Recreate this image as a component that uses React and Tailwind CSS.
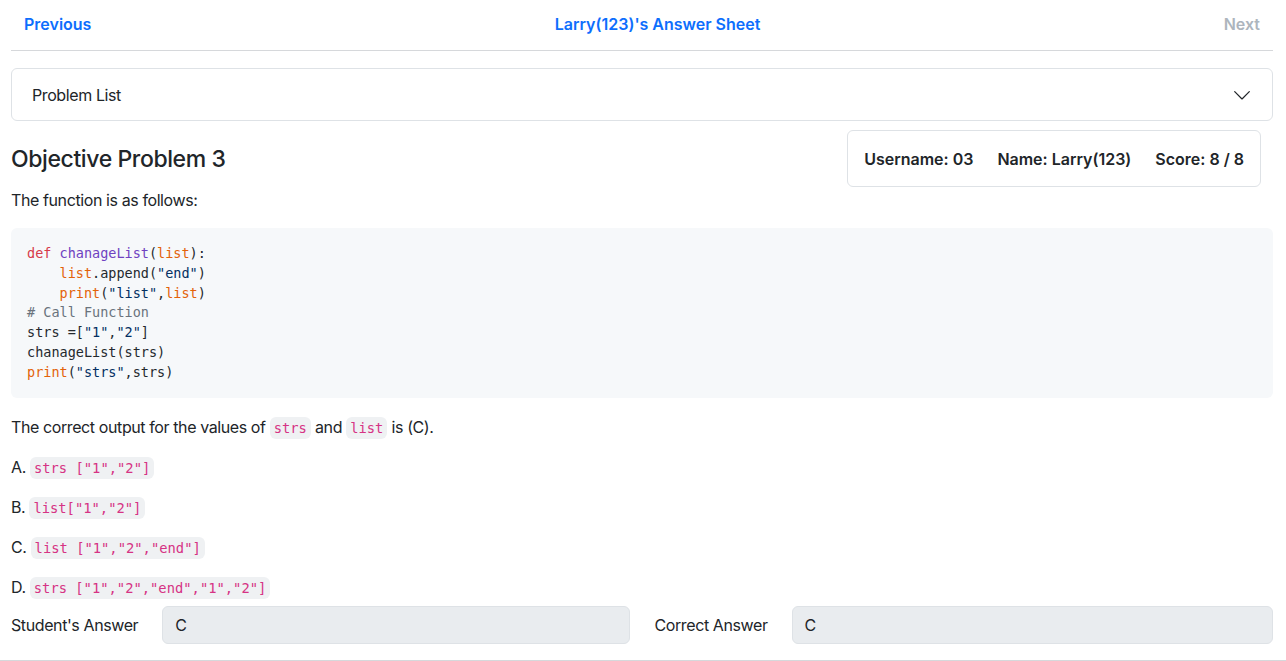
const sans = { fontFamily: 'Inter, "Noto Sans", sans-serif' };

function C({ children, className = '' }) {
  return <span className={className}>{children}</span>;
}

function Inline({ children }) {
  return (
    <code className="font-['DejaVu_Sans_Mono',monospace] text-[13.8px] leading-none tracking-normal text-[#d63384] bg-[#eff1f3] rounded-md px-[4px] py-[3px]">
      {children}
    </code>
  );
}

export default function App() {
  return (
    <div className="bg-white text-[#212529] min-h-screen" style={sans}>
      <div className="pl-[11px] pr-[13px]">
        <nav className="flex items-center justify-between h-[51px] border-b border-[#d6d8db] pl-[13px] pr-[13px] pb-[2px] text-[16px] font-semibold">
          <a className="text-[#0d6efd]">Previous</a>
          <span className="text-[#0d6efd]">Larry(123)'s Answer Sheet</span>
          <span className="text-[#adb5bd]">Next</span>
        </nav>

        <div className="mt-[17px] border border-[#dee2e6] rounded-md h-[53px] flex items-center justify-between pl-[20px] pr-[21px] tracking-[-0.4px]">
          <span className="text-[16px]">Problem List</span>
          <svg width="18" height="18" viewBox="0 0 16 16" fill="none" stroke="#212529" strokeWidth="1.1" strokeLinecap="round" strokeLinejoin="round">
            <path d="M1.5 5l6.5 6.5L14.5 5" />
          </svg>
        </div>

        <div className="flex justify-between items-start mt-[9px]">
          <div className="tracking-[-0.4px]">
            <h2 className="text-[23px] font-medium mt-[15px] leading-[28px]">Objective Problem 3</h2>
            <p className="mt-[15px] text-[16px] leading-[24px]">The function is as follows:</p>
          </div>
          <div className="border border-[#dee2e6] rounded-md h-[57px] px-[16px] flex items-center gap-[24px] mr-[12px] font-semibold text-[16px]">
            <span>Username: 03</span>
            <span>Name: Larry(123)</span>
            <span>Score: 8 / 8</span>
          </div>
        </div>

        <pre className="mt-[16px] bg-[#f6f8fa] rounded-md px-[16px] pt-[16px] pb-[15px] font-['DejaVu_Sans_Mono',monospace] text-[13.5px] leading-[19.8px] text-[#24292e]">
          <C className="text-[#d73a49]">def</C> <C className="text-[#6f42c1]">chanageList</C>(<C className="text-[#e36209]">list</C>):{'\n'}
          {'    '}<C className="text-[#e36209]">list</C>.append(<C className="text-[#032f62]">"end"</C>){'\n'}
          {'    '}<C className="text-[#e36209]">print</C>(<C className="text-[#032f62]">"list"</C>,<C className="text-[#e36209]">list</C>){'\n'}
          <C className="text-[#6a737d]"># Call Function</C>{'\n'}
          strs =[<C className="text-[#032f62]">"1"</C>,<C className="text-[#032f62]">"2"</C>]{'\n'}
          chanageList(strs){'\n'}
          <C className="text-[#e36209]">print</C>(<C className="text-[#032f62]">"strs"</C>,strs)
        </pre>

        <div className="text-[16px] leading-[24px] mt-[17px] tracking-[-0.4px]">
          <p className="mb-[16px]">The correct output for the values of <Inline>strs</Inline> and <Inline>list</Inline> is (C).</p>
          <p className="mb-[16px]">A. <Inline>strs ["1","2"]</Inline></p>
          <p className="mb-[16px]">B. <Inline>list["1","2"]</Inline></p>
          <p className="mb-[16px]">C. <Inline>list ["1","2","end"]</Inline></p>
          <p>D. <Inline>strs ["1","2","end","1","2"]</Inline></p>
        </div>

        <div className="grid grid-cols-2 gap-[25px] mt-[7px] tracking-[-0.4px]">
          <div className="flex items-center">
            <span className="pr-[24px] text-[16px]">Student's Answer</span>
            <div className="flex-1 h-[38px] bg-[#e9ecef] border border-[#dee2e6] rounded-md flex items-center px-[12px] text-[16px]">C</div>
          </div>
          <div className="flex items-center">
            <span className="pr-[24px] text-[16px]">Correct Answer</span>
            <div className="flex-1 h-[38px] bg-[#e9ecef] border border-[#dee2e6] rounded-md flex items-center px-[12px] text-[16px]">C</div>
          </div>
        </div>
      </div>
      <div className="mt-[16px] border-t border-[#d6d8db] h-[20px]"></div>
    </div>
  );
}
